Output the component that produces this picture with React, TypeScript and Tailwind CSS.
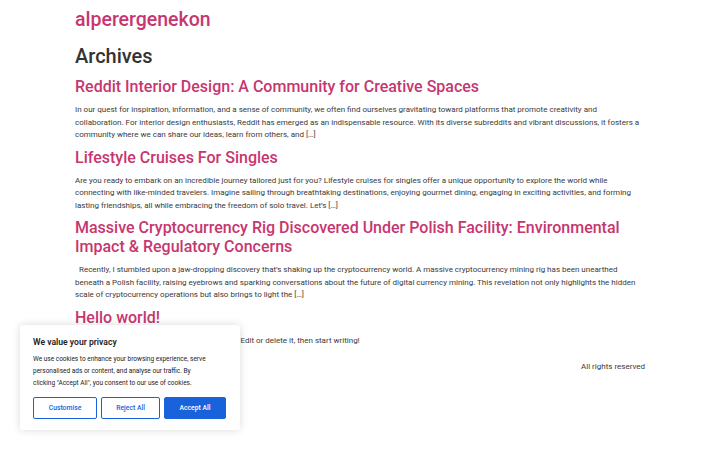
const posts = [
  {
    title: "Reddit Interior Design: A Community for Creative Spaces",
    excerpt:
      "In our quest for inspiration, information, and a sense of community, we often find ourselves gravitating toward platforms that promote creativity and collaboration. For interior design enthusiasts, Reddit has emerged as an indispensable resource. With its diverse subreddits and vibrant discussions, it fosters a community where we can share our ideas, learn from others, and […]",
  },
  {
    title: "Lifestyle Cruises For Singles",
    excerpt:
      "Are you ready to embark on an incredible journey tailored just for you? Lifestyle cruises for singles offer a unique opportunity to explore the world while connecting with like-minded travelers. Imagine sailing through breathtaking destinations, enjoying gourmet dining, engaging in exciting activities, and forming lasting friendships, all while embracing the freedom of solo travel. Let’s […]",
  },
  {
    title:
      "Massive Cryptocurrency Rig Discovered Under Polish Facility: Environmental Impact & Regulatory Concerns",
    excerpt:
      "\u00a0 Recently, I stumbled upon a jaw-dropping discovery that’s shaking up the cryptocurrency world. A massive cryptocurrency mining rig has been unearthed beneath a Polish facility, raising eyebrows and sparking conversations about the future of digital currency mining. This revelation not only highlights the hidden scale of cryptocurrency operations but also brings to light the […]",
  },
  {
    title: "Hello world!",
    excerpt:
      "Welcome to WordPress. This is your first post. Edit or delete it, then start writing!",
  },
];

function CookieBanner() {
  return (
    <div className="absolute left-[20px] top-[325px] w-[220px] rounded-[3px] bg-white px-[13px] pb-[11px] pt-[10px] shadow-[0_0_8px_rgba(0,0,0,0.15)]">
      <p className="text-[8.6px] font-semibold leading-[14px] text-[#212121]">We value your privacy</p>
      <p className="mt-[4px] text-[6.5px] leading-[12px] text-[#212121]">
        We use cookies to enhance your browsing experience, serve
        <br />
        personalised ads or content, and analyse our traffic. By
        <br />
        clicking "Accept All", you consent to our use of cookies.
      </p>
      <div className="mt-[8px] flex gap-[4px]">
        <button className="h-[22px] w-[64px] rounded-[2px] border border-[#1863dc] text-[6.8px] font-medium text-[#1863dc]">
          Customise
        </button>
        <button className="h-[22px] w-[59px] rounded-[2px] border border-[#1863dc] text-[6.8px] font-medium text-[#1863dc]">
          Reject All
        </button>
        <button className="h-[22px] w-[62px] rounded-[2px] border border-[#1863dc] bg-[#1863dc] text-[6.8px] font-medium text-white">
          Accept All
        </button>
      </div>
    </div>
  );
}

export default function App() {
  return (
    <div className="relative min-h-[450px] bg-white font-['Roboto',sans-serif] text-[#333]">
      <div className="mx-[75px] w-[570px] pt-[7px]">
        <h1 className="text-[19.5px] font-medium leading-[26px] text-[#c7366f]">alperergenekon</h1>
        <h2 className="mt-[10px] text-[20px] font-medium leading-[26px] text-[#333]">Archives</h2>
        <main className="mt-[8px]">
          {posts.map((p) => (
            <article key={p.title} className="mb-[6px]">
              <h3 className="text-[16px] font-medium leading-[19px] text-[#c7366f]">
                <a href="#">{p.title}</a>
              </h3>
              <p className="mt-[8px] text-[8px] leading-[12.5px] text-[#3a3a3a]">{p.excerpt}</p>
            </article>
          ))}
        </main>
        <footer className="mt-[14px] text-right text-[8px] leading-[12px] text-[#3a3a3a]">
          All rights reserved
        </footer>
      </div>
      <CookieBanner />
    </div>
  );
}
